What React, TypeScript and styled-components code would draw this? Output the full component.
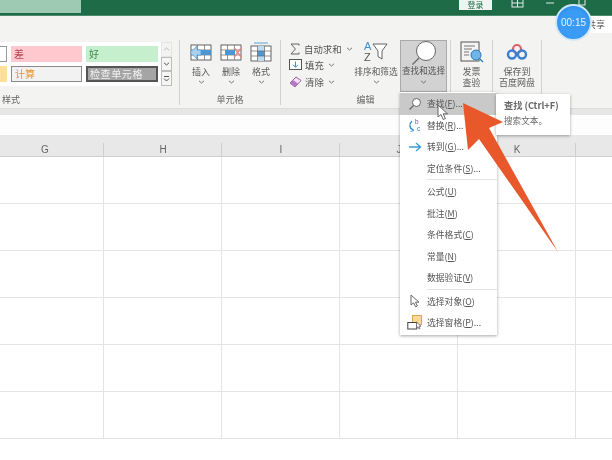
import React from "react";
import styled, { createGlobalStyle } from "styled-components";

const FONT = `"Noto Sans CJK SC", "Noto Sans", "Liberation Sans", sans-serif`;

const GlobalStyle = createGlobalStyle`
  html, body {
    margin: 0;
    padding: 0;
    background: #fff;
  }
  * {
    box-sizing: border-box;
  }
`;

const columns = ["G", "H", "I", "J", "K", ""];
const rows = [0, 1, 2, 3, 4, 5];

const SearchIcon = () => (
  <svg width="14" height="14" viewBox="0 0 14 14">
    <circle cx="8.5" cy="5.5" r="4" fill="#fff" stroke="#666" strokeWidth="1" />
    <path d="M5.6 8.4 L1.5 12.5" stroke="#666" strokeWidth="1.2" />
  </svg>
);

const ReplaceIcon = () => (
  <svg width="14" height="15" viewBox="0 0 14 15">
    <text x="7" y="6" fontSize="6.5" fill="#7a4fa8" fontFamily="Liberation Sans">b</text>
    <text x="9" y="13" fontSize="6.5" fill="#2f7fc0" fontFamily="Liberation Sans">c</text>
    <path d="M4 3 C1 6 1 10 5 12" fill="none" stroke="#2f8fd0" strokeWidth="1.3" />
    <path d="M3 10 L6 12.5 L2.5 13.5" fill="none" stroke="#2f8fd0" strokeWidth="0.9" />
  </svg>
);

const GotoIcon = () => (
  <svg width="14" height="12" viewBox="0 0 14 12">
    <path d="M1 6 H12 M8 2 L12.5 6 L8 10" fill="none" stroke="#3d9ad6" strokeWidth="1.3" />
  </svg>
);

const PointerIcon = () => (
  <svg width="12" height="14" viewBox="0 0 12 14">
    <path d="M2 1 V11 L4.6 8.8 L6.6 12.8 L8.4 12 L6.5 8.2 H10 Z" fill="#fff" stroke="#666" strokeWidth="1" />
  </svg>
);

const PaneIcon = () => (
  <svg width="16" height="15" viewBox="0 0 16 15">
    <rect x="5.5" y="0.5" width="9" height="9" fill="#fbd99a" stroke="#dda850" />
    <rect x="0.8" y="7.5" width="9" height="6.5" fill="#fff" stroke="#444" />
    <path d="M9.5 7 V13 L11 11.8 L12 14 L13 13.6 L12 11.3 H14 Z" fill="#fff" stroke="#555" strokeWidth="0.7" />
  </svg>
);

const TableBase = ({ children }: { children?: React.ReactNode }) => (
  <svg width="24" height="18" viewBox="0 0 24 18">
    <rect x="2" y="2" width="20" height="15" fill="#fff" stroke="#555" strokeWidth="0.9" />
    <path d="M2 7 H22 M2 12 H22 M8.5 2 V17 M15.5 2 V17" stroke="#666" strokeWidth="0.7" />
    {children}
  </svg>
);

const InsertIcon = () => (
  <TableBase>
    <rect x="5" y="7" width="17" height="5" fill="#4a97d4" />
    <path d="M8 3 L1 9.5 L8 16 V12 H12 V7 H8 Z" fill="#a8d2ef" stroke="#4a97d4" strokeWidth="0.7" />
  </TableBase>
);

const DeleteIcon = () => (
  <TableBase>
    <rect x="6" y="7" width="10" height="5" fill="#4a97d4" />
    <path d="M15 4.5 L22.5 14.5 M22.5 4.5 L15 14.5" stroke="#e08a80" strokeWidth="1.4" />
  </TableBase>
);

const FormatIcon = () => (
  <svg width="22" height="20" viewBox="0 0 22 20">
    <path d="M4 1 H18" stroke="#4a97d4" strokeWidth="0.9" />
    <rect x="1" y="4" width="20" height="15" fill="#fff" stroke="#555" strokeWidth="0.9" />
    <rect x="7.5" y="4" width="7" height="15" fill="#bcdcf3" />
    <rect x="7.5" y="9" width="7" height="5" fill="#4a97d4" />
    <path d="M1 9 H21 M1 14 H21 M7.5 4 V19 M14.5 4 V19" stroke="#666" strokeWidth="0.7" />
  </svg>
);

const SumIcon = () => (
  <svg width="12" height="12" viewBox="0 0 12 12">
    <path d="M10 2.5 V1 H2 L6.4 6 L2 11 H10 V9.5" fill="none" stroke="#555" strokeWidth="0.9" />
  </svg>
);

const FillIcon = () => (
  <svg width="13" height="12" viewBox="0 0 13 12">
    <rect x="0.5" y="0.5" width="12" height="10" fill="#fff" stroke="#555" />
    <path d="M6.5 2.5 V8 M4 5.8 L6.5 8.3 L9 5.8" fill="none" stroke="#3a90d0" strokeWidth="1" />
  </svg>
);

const EraserIcon = () => (
  <svg width="13" height="12" viewBox="0 0 13 12">
    <path d="M1 7 L7 1 L12 4.5 L6 11 Z" fill="#f3e4f5" stroke="#a55cb0" strokeWidth="1" />
    <path d="M1 7 L4 4 L9 7.6 L6 11 Z" fill="#b777c4" />
  </svg>
);

const SortIcon = () => (
  <svg width="30" height="24" viewBox="0 0 30 24">
    <text x="3" y="10" fontSize="11" fill="#3d8fd0" fontFamily="Liberation Sans">A</text>
    <text x="3" y="21" fontSize="11" fill="#555" fontFamily="Liberation Sans">Z</text>
    <path d="M12 4 H26 L21 11 V19 L17 16.5 V11 Z" fill="#fff" stroke="#555" strokeWidth="0.9" />
  </svg>
);

const BigSearchIcon = () => (
  <svg width="28" height="24" viewBox="0 0 28 24">
    <circle cx="16" cy="10" r="9.5" fill="#fff" stroke="#666" strokeWidth="1" />
    <path d="M9 17 L2.5 23.5" stroke="#666" strokeWidth="1.2" />
  </svg>
);

const InvoiceIcon = () => (
  <svg width="24" height="22" viewBox="0 0 24 22">
    <rect x="1" y="1" width="18" height="19" fill="#f4f4f4" stroke="#555" strokeWidth="1" />
    <path d="M4 5 H15 M4 8 H12 M4 11 H9 M4 14 H9" stroke="#777" strokeWidth="1" />
    <circle cx="16" cy="14" r="5" fill="#6fb5e8" stroke="#2f78b8" strokeWidth="1" />
    <path d="M19.5 17.5 L23 21" stroke="#2f78b8" strokeWidth="1.3" />
  </svg>
);

const CloudIcon = () => (
  <svg width="22" height="18" viewBox="0 0 22 18">
    <circle cx="11" cy="6" r="4" fill="none" stroke="#d9616a" strokeWidth="2.2" />
    <circle cx="6" cy="11.5" r="4" fill="none" stroke="#3d7fd0" strokeWidth="2.4" />
    <circle cx="16" cy="11.5" r="4" fill="none" stroke="#3d7fd0" strokeWidth="2.4" />
  </svg>
);

const Chevron = () => (
  <ChevronBox viewBox="0 0 7 4">
    <path d="M1 0.8 L3.5 3 L6 0.8" fill="none" stroke="#666" strokeWidth="0.9" />
  </ChevronBox>
);

const menuItems: { label: string; hotkey: string; dots?: boolean; icon?: React.ReactNode; active?: boolean; dividerAfter?: boolean }[] = [
  { label: "查找", hotkey: "F", dots: true, icon: <SearchIcon />, active: true },
  { label: "替换", hotkey: "R", dots: true, icon: <ReplaceIcon /> },
  { label: "转到", hotkey: "G", dots: true, icon: <GotoIcon /> },
  { label: "定位条件", hotkey: "S", dots: true, dividerAfter: true },
  { label: "公式", hotkey: "U" },
  { label: "批注", hotkey: "M" },
  { label: "条件格式", hotkey: "C" },
  { label: "常量", hotkey: "N" },
  { label: "数据验证", hotkey: "V", dividerAfter: true },
  { label: "选择对象", hotkey: "O", icon: <PointerIcon /> },
  { label: "选择窗格", hotkey: "P", dots: true, icon: <PaneIcon /> },
];

const App = () => {
  return (
    <Page>
      <GlobalStyle />
      <TitleBar>
        <FileTab />
        <Login>登录</Login>
        <WindowIcon $left={511}>
          <svg width="13" height="9" viewBox="0 0 13 9">
            <rect x="1" y="-3" width="11" height="10" fill="none" stroke="#dfeee6" />
            <path d="M6.5 0 V7 M1 3 H12" stroke="#dfeee6" />
          </svg>
        </WindowIcon>
        <WindowIcon $left={546}>
          <svg width="8" height="9" viewBox="0 0 8 9">
            <path d="M0 3 H8" stroke="#dfeee6" />
          </svg>
        </WindowIcon>
        <WindowIcon $left={578}>
          <svg width="8" height="9" viewBox="0 0 8 9">
            <rect x="1" y="-2" width="6" height="7" fill="none" stroke="#dfeee6" />
          </svg>
        </WindowIcon>
      </TitleBar>

      <Ribbon>
        <Group $width={180}>
          <GroupBody>
            <Gallery>
              <StyleGrid>
                <StyleCell $kind="blank" />
                <StyleCell $kind="bad">差</StyleCell>
                <StyleCell $kind="good">好</StyleCell>
                <StyleCell $kind="neutral" />
                <StyleCell $kind="calc">计算</StyleCell>
                <StyleCell $kind="check">检查单元格</StyleCell>
              </StyleGrid>
              <ScrollCol>
                <ScrollButton $muted>
                  <svg width="7" height="4" viewBox="0 0 7 4"><path d="M1 3.2 L3.5 1 L6 3.2" fill="none" stroke="#bbb" /></svg>
                </ScrollButton>
                <ScrollButton>
                  <svg width="7" height="4" viewBox="0 0 7 4"><path d="M1 0.8 L3.5 3 L6 0.8" fill="none" stroke="#555" /></svg>
                </ScrollButton>
                <ScrollButton>
                  <svg width="7" height="6" viewBox="0 0 7 6"><path d="M1 0.5 H6 M1 2.5 L3.5 5 L6 2.5" fill="none" stroke="#555" /></svg>
                </ScrollButton>
              </ScrollCol>
            </Gallery>
          </GroupBody>
          <GroupLabel $align="left">样式</GroupLabel>
        </Group>

        <Group $width={101}>
          <GroupBody $pad={6}>
            <Tool $width={30}><IconSlot><InsertIcon /></IconSlot><ToolLabel>插入</ToolLabel><Chevron /></Tool>
            <Tool $width={30}><IconSlot><DeleteIcon /></IconSlot><ToolLabel>删除</ToolLabel><Chevron /></Tool>
            <Tool $width={30}><IconSlot><FormatIcon /></IconSlot><ToolLabel>格式</ToolLabel><Chevron /></Tool>
          </GroupBody>
          <GroupLabel>单元格</GroupLabel>
        </Group>

        <Group $width={170}>
          <GroupBody $pad={8}>
            <EditList>
              <EditRow><SumIcon />自动求和<Chevron /></EditRow>
              <EditRow><FillIcon />填充<Chevron /></EditRow>
              <EditRow><EraserIcon />清除<Chevron /></EditRow>
            </EditList>
            <Tool $width={48}>
              <IconSlot><SortIcon /></IconSlot>
              <ToolLabel $small>排序和筛选</ToolLabel>
              <Chevron />
            </Tool>
            <FindButton>
              <BigSearchIcon />
              <FindLabel>查找和选择</FindLabel>
              <Chevron />
            </FindButton>
          </GroupBody>
          <GroupLabel>编辑</GroupLabel>
        </Group>

        <Group $width={42}>
          <GroupBody>
            <Tool $width={41}>
              <IconSlot><InvoiceIcon /></IconSlot>
              <ToolLabel>{"发票\n查验"}</ToolLabel>
            </Tool>
          </GroupBody>
        </Group>

        <Group $width={49}>
          <GroupBody>
            <Tool $width={48}>
              <IconSlot><CloudIcon /></IconSlot>
              <ToolLabel>{"保存到\n百度网盘"}</ToolLabel>
            </Tool>
          </GroupBody>
        </Group>

        <ShareBox>共享</ShareBox>
      </Ribbon>

      <Strip />
      <FormulaBar />

      <Sheet>
        <HeaderRow>
          {columns.map((c) => (
            <HeaderCell key={c}>{c}</HeaderCell>
          ))}
        </HeaderRow>
        {rows.map((r) => (
          <SheetRow key={r}>
            {columns.map((c) => (
              <SheetCell key={c} />
            ))}
          </SheetRow>
        ))}
      </Sheet>

      <Menu>
        {menuItems.map((item) => (
          <React.Fragment key={item.label}>
            <MenuItem $active={item.active}>
              <MenuIcon>{item.icon}</MenuIcon>
              <span>
                {item.label}(<u>{item.hotkey}</u>){item.dots ? "..." : ""}
              </span>
            </MenuItem>
            {item.dividerAfter && <MenuDivider />}
          </React.Fragment>
        ))}
      </Menu>

      <Tip>
        <TipTitle>查找 (Ctrl+F)</TipTitle>
        <TipText>搜索文本。</TipText>
      </Tip>

      <Cursor width="12" height="17" viewBox="0 0 12 17">
        <path d="M1 1 V13 L4 10.5 L6.2 15.5 L8.4 14.6 L6.2 9.8 H10.5 Z" fill="#fff" stroke="#666" strokeWidth="1" />
      </Cursor>

      <ArrowMark width="612" height="460" viewBox="0 0 612 460">
        <polygon points="463,103 503,122 489,128 558,252 479,139 468,150" fill="#e8582a" />
      </ArrowMark>

      <Timer>00:15</Timer>
    </Page>
  );
};

export default App;

const Page = styled.div`
  position: relative;
  width: 612px;
  height: 460px;
  overflow: hidden;
  background: #fff;
  font-family: ${FONT};
  color: #555;
  display: flex;
  flex-direction: column;
  filter: blur(0.35px);
`;

const TitleBar = styled.div`
  position: relative;
  height: 16px;
  flex: none;
  background: #1d6b47;
  border-bottom: 1px solid #4b8a6c;
`;

const FileTab = styled.div`
  width: 81px;
  height: 13px;
  background: #9ec9b2;
`;

const Login = styled.div`
  position: absolute;
  left: 459px;
  top: 0;
  width: 33px;
  height: 10px;
  background: #eef4f0;
  color: #1d6b47;
  font-size: 8px;
  line-height: 10px;
  text-align: center;
`;

const WindowIcon = styled.div<{ $left: number }>`
  position: absolute;
  left: ${(p) => p.$left}px;
  top: 0;
  height: 9px;
  line-height: 0;
`;

const Ribbon = styled.div`
  position: relative;
  flex: none;
  height: 92px;
  padding: 24px 0 3px;
  display: flex;
  background: #f3f3f2;
`;

const Group = styled.div<{ $width: number }>`
  width: ${(p) => p.$width}px;
  flex: none;
  display: flex;
  flex-direction: column;
  border-right: 1px solid #d2d2d2;
`;

const GroupBody = styled.div<{ $pad?: number }>`
  height: 55px;
  display: flex;
  padding-left: ${(p) => p.$pad ?? 0}px;
`;

const GroupLabel = styled.div<{ $align?: string }>`
  height: 10px;
  line-height: 10px;
  font-size: 9px;
  color: #666;
  padding-left: ${(p) => (p.$align === "left" ? "2px" : "0")};
  text-align: ${(p) => p.$align ?? "center"};
`;

const Gallery = styled.div`
  width: 172px;
  height: 44px;
  margin-top: 2px;
  display: flex;
`;

const StyleGrid = styled.div`
  width: 161px;
  background: #fff;
  padding: 4px 0;
  display: grid;
  grid-template-columns: 7px 71px 72px;
  grid-template-rows: 16px 16px;
  column-gap: 4px;
  row-gap: 4px;
`;

const cellStyles: Record<string, string> = {
  blank: "background:#fff;border:1px solid #999;border-left:none;",
  bad: "background:#ffc7ce;color:#b4464f;line-height:15px;",
  good: "background:#c6efce;color:#3f8a50;line-height:15px;",
  neutral: "background:#ffdf9a;",
  calc: "background:#f2f2f2;color:#e8952f;border:1px solid #8a8a8a;line-height:13px;",
  check: "background:#a5a5a5;color:#f2f2f2;border:2px solid #555;line-height:12px;letter-spacing:0.6px;padding-left:2px;",
};

const StyleCell = styled.div<{ $kind: string }>`
  font-size: 10px;
  padding-left: 3px;
  white-space: nowrap;
  overflow: hidden;
  ${(p) => cellStyles[p.$kind]}
`;

const ScrollCol = styled.div`
  width: 11px;
  display: flex;
  flex-direction: column;
`;

const ScrollButton = styled.div<{ $muted?: boolean }>`
  flex: 1;
  display: flex;
  align-items: center;
  justify-content: center;
  background: ${(p) => (p.$muted ? "#f3f3f3" : "#f5f5f5")};
  border: 1px solid ${(p) => (p.$muted ? "#e4e4e4" : "#bdbdbd")};
`;

const Tool = styled.div<{ $width: number }>`
  width: ${(p) => p.$width}px;
  flex: none;
  display: flex;
  flex-direction: column;
  align-items: center;
`;

const IconSlot = styled.div`
  height: 24px;
  margin-bottom: 2px;
  display: flex;
  align-items: center;
  justify-content: center;
`;

const ToolLabel = styled.div<{ $small?: boolean }>`
  font-size: ${(p) => (p.$small ? "8.7px" : "9px")};
  line-height: 11px;
  white-space: pre;
  text-align: center;
  color: #5c5c5c;
`;

const ChevronBox = styled.svg`
  width: 7px;
  height: 4px;
  flex: none;
  margin: 3px 0 0;
`;

const EditList = styled.div`
  width: 63px;
  padding-top: 1px;
  display: flex;
  flex-direction: column;
  gap: 1.5px;

  svg {
    flex: none;
  }
`;

const EditRow = styled.div`
  height: 15px;
  display: flex;
  align-items: center;
  gap: 3px;
  font-size: 9.4px;
  white-space: nowrap;

  ${ChevronBox} {
    margin: 0 0 0 1px;
  }
`;

const FindButton = styled.div`
  width: 47px;
  height: 52px;
  flex: none;
  background: #d2d2d2;
  border: 1px solid #aaa;
  display: flex;
  flex-direction: column;
  align-items: center;
`;

const FindLabel = styled.div`
  font-size: 8.6px;
  line-height: 11px;
  margin-bottom: 1px;
  white-space: nowrap;
  color: #555;
`;

const ShareBox = styled.div`
  position: absolute;
  left: 585px;
  top: 0;
  width: 27px;
  height: 17px;
  padding-right: 7px;
  background: #fff;
  font-size: 9px;
  line-height: 17px;
  text-align: right;
`;

const Strip = styled.div`
  height: 7px;
  flex: none;
  background: #e6e6e6;
  border-top: 1px solid #dcdcdc;
`;

const FormulaBar = styled.div`
  height: 20px;
  flex: none;
  background: #fdfdfd;
`;

const Sheet = styled.div`
  flex: none;
  margin-left: -14px;
  display: flex;
  flex-direction: column;
`;

const HeaderRow = styled.div`
  display: flex;
  height: 22px;
  background: #e8e8e8;
  border-bottom: 1px solid #cfcfcf;
`;

const HeaderCell = styled.div`
  position: relative;
  width: 118px;
  flex: none;
  padding-top: 9px;
  font-size: 10px;
  line-height: 12px;
  text-align: center;
  font-family: "Liberation Sans", sans-serif;
  color: #666;

  &::after {
    content: "";
    position: absolute;
    right: 0;
    top: 8px;
    bottom: 0;
    width: 1px;
    background: #cfcfcf;
  }
`;

const SheetRow = styled.div`
  display: flex;
  height: 47px;
  flex: none;
  border-bottom: 1px solid #e4e4e4;
`;

const SheetCell = styled.div`
  width: 118px;
  flex: none;
  border-right: 1px solid #e4e4e4;
`;

const Menu = styled.div`
  position: absolute;
  left: 400px;
  top: 92px;
  width: 97px;
  height: 243px;
  padding-top: 1px;
  background: #fff;
  box-shadow: 0 1px 3px rgba(0, 0, 0, 0.35);
`;

const MenuItem = styled.div<{ $active?: boolean }>`
  height: 21.5px;
  display: flex;
  align-items: center;
  background: ${(p) => (p.$active ? "#c9c9c9" : "transparent")};
  font-size: 8.8px;
  color: #555;
  white-space: nowrap;
`;

const MenuIcon = styled.div`
  width: 27px;
  flex: none;
  display: flex;
  justify-content: center;
  align-items: center;
  padding-left: 2px;
`;

const MenuDivider = styled.div`
  height: 1px;
  margin: 0 0 1px 27px;
  background: #e2e2e2;
`;

const Tip = styled.div`
  position: absolute;
  left: 496px;
  top: 94px;
  width: 74px;
  height: 41px;
  padding: 5px 8px;
  background: #fff;
  box-shadow: 0 1px 3px rgba(0, 0, 0, 0.35);
`;

const TipTitle = styled.div`
  font-size: 9.2px;
  line-height: 12px;
  font-weight: 700;
  color: #666;
  white-space: nowrap;
`;

const TipText = styled.div`
  margin-top: 3px;
  font-size: 8.6px;
  line-height: 12px;
  color: #666;
`;

const Cursor = styled.svg`
  position: absolute;
  left: 437px;
  top: 104px;
`;

const ArrowMark = styled.svg`
  position: absolute;
  left: 0;
  top: 0;
  pointer-events: none;
`;

const Timer = styled.div`
  position: absolute;
  left: 555px;
  top: 4px;
  width: 37px;
  height: 37px;
  border-radius: 50%;
  background: radial-gradient(circle at 50% 55%, #3a9bf4 55%, #1f7fe6 100%);
  border: 2px solid #cfe7fa;
  color: #e6f3ff;
  font-family: "Liberation Sans", sans-serif;
  font-size: 10px;
  line-height: 33px;
  text-align: center;
`;
